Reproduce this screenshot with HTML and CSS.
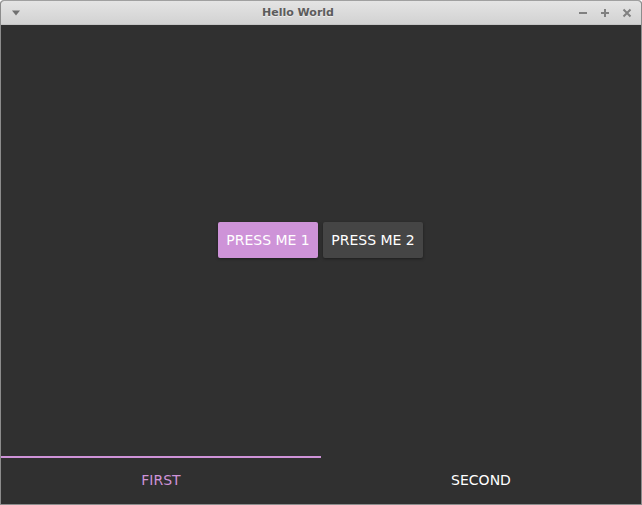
FILE: index.html
```html
<!DOCTYPE html>
<html lang="en">
<head>
    <meta charset="UTF-8">
    <title>Hello World</title>
    <link rel="stylesheet" href="styles.css">
</head>
<body>
    <div class="window">
        <div class="titlebar">
            <svg class="menu-arrow" width="10" height="6" viewBox="0 0 10 6"><path d="M1 0.5 L9 0.5 L5 5.5 Z" fill="#707070"/></svg>
            <span class="title">Hello World</span>
            <div class="controls">
                <svg width="10" height="10" viewBox="0 0 10 10"><path d="M1 5 H9" stroke="#808080" stroke-width="2"/></svg>
                <svg width="10" height="10" viewBox="0 0 10 10"><path d="M1 5 H9 M5 1 V9" stroke="#808080" stroke-width="2"/></svg>
                <svg width="10" height="10" viewBox="0 0 10 10"><path d="M1.5 1.5 L8.5 8.5 M8.5 1.5 L1.5 8.5" stroke="#808080" stroke-width="2"/></svg>
            </div>
        </div>
        <div class="content">
            <button class="btn primary">PRESS ME 1</button>
            <button class="btn">PRESS ME 2</button>
        </div>
        <div class="tabs">
            <div class="tab active">FIRST</div>
            <div class="tab">SECOND</div>
        </div>
    </div>
</body>
</html>
```

FILE: styles.css
```css
:root {
    --accent: #ce93d8;
    --bg: #303030;
}

html, body {
    margin: 0;
    height: 100%;
}

body {
    font-family: 'DejaVu Sans', 'Open Sans', sans-serif;
}

.window {
    box-sizing: border-box;
    height: 505px;
    width: 642px;
    display: flex;
    flex-direction: column;
    border: 1px solid #8c8c8c;
    border-top-color: #a0a0a0;
    border-radius: 4px 4px 0 0;
    background: var(--bg);
    overflow: hidden;
}

.titlebar {
    height: 23px;
    display: flex;
    align-items: center;
    position: relative;
    background: linear-gradient(#e4e4e4, #d2d2d2);
    border-bottom: 1px solid #c4c4c4;
}

.menu-arrow {
    margin-left: 10px;
}

.title {
    position: absolute;
    left: 0;
    right: 0;
    padding-right: 46px;
    text-align: center;
    font-size: 11px;
    font-weight: bold;
    color: #5c5c5c;
    text-shadow: 0 1px 0 #eee;
}

.controls {
    margin-left: auto;
    margin-right: 9px;
    display: flex;
    gap: 12px;
}

.content {
    flex: 1;
    display: flex;
    align-items: center;
    justify-content: center;
    gap: 5px;
    padding-bottom: 1px;
    padding-right: 1px;
}

.btn {
    width: 100px;
    height: 36px;
    border: none;
    border-radius: 2px;
    background: #454545;
    color: #fff;
    font-family: inherit;
    font-size: 14px;
    padding: 0;
    box-shadow: 0 1px 3px rgba(0, 0, 0, 0.4);
}

.btn.primary {
    background: var(--accent);
}

.tabs {
    height: 48px;
    display: flex;
}

.tab {
    flex: 1;
    display: flex;
    align-items: center;
    justify-content: center;
    color: #fff;
    font-size: 14px;
    border-top: 2px solid transparent;
    padding-bottom: 2px;
}

.tab.active {
    color: var(--accent);
    border-top-color: var(--accent);
}
```
